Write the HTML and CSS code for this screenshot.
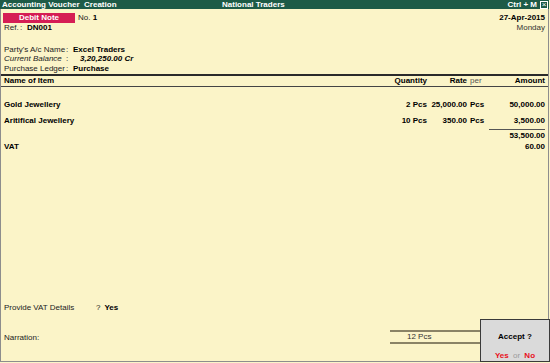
FILE: index.html
```html
<!DOCTYPE html>
<html>
<head>
<meta charset="utf-8">
<link rel="stylesheet" href="styles.css">
</head>
<body>
<div class="frame">
  <div class="titlebar">
    <span class="tb-left">Accounting Voucher&nbsp; Creation</span>
    <span class="tb-center">National Traders</span>
    <span class="tb-right">Ctrl + M <span class="closebox">×</span></span>
  </div>

  <div class="head">
    <div class="row r1">
      <span class="vtype">Debit Note</span>
      <span class="no">No. <b>1</b></span>
      <span class="push date">27-Apr-2015</span>
    </div>
    <div class="row r2">
      <span class="ref-l">Ref.</span><span class="ref-c">:</span><b>DN001</b>
      <span class="push day">Monday</span>
    </div>
    <div class="party">
      <span class="pl">Party's A/c Name</span><span class="pc">:</span><b>Excel Traders</b>
      <i class="pl">Current Balance</i><span class="pc">:</span><b class="bal">3,20,250.00 Cr</b>
      <span class="pl">Purchase Ledger</span><span class="pc">:</span><b>Purchase</b>
    </div>
  </div>

  <div class="items">
    <div class="grid ghead">
      <b>Name of Item</b>
      <b class="num">Quantity</b>
      <b class="num">Rate</b>
      <span class="per">per</span>
      <b class="num">Amount</b>
    </div>
    <div class="grid gi first">
      <b>Gold Jewellery</b>
      <b class="num">2 Pcs</b>
      <b class="num">25,000.00</b>
      <b class="per">Pcs</b>
      <b class="num">50,000.00</b>
    </div>
    <div class="grid gi second">
      <b>Aritifical Jewellery</b>
      <b class="num">10 Pcs</b>
      <b class="num">350.00</b>
      <b class="per">Pcs</b>
      <b class="num">3,500.00</b>
    </div>
    <div class="grid gi total">
      <span></span><span></span><span></span><span></span>
      <b class="num tline">53,500.00</b>
    </div>
    <div class="grid gi vat">
      <b>VAT</b><span></span><span></span><span></span>
      <b class="num">60.00</b>
    </div>
  </div>

  <div class="foot">
    <div class="vatrow">
      <span class="vl">Provide VAT Details</span><span>?</span><b class="yes">Yes</b>
    </div>
    <div class="narr">
      <span class="nl">Narration:</span>
      <span class="qtybox">12 Pcs</span>
    </div>
  </div>

  <div class="accept">
    <b class="acc-q">Accept ?</b>
    <div class="acc-a"><b class="red">Yes</b> <span class="or">or</span> <b class="red">No</b></div>
  </div>
</div>
</body>
</html>
```

FILE: styles.css
```css
* { box-sizing: border-box; }
html, body { margin: 0; padding: 0; }
body {
  width: 550px;
  height: 363px;
  background: #fbf4c8;
  font-family: "Liberation Sans", Arial, sans-serif;
  font-size: 8px;
  color: #222;
  overflow: hidden;
}
b { color: #000; font-weight: bold; }
.frame {
  position: relative;
  width: 549px;
  height: 362px;
  border-left: 1px solid #8d8d8d;
  border-right: 1px solid #8d8d8d;
  border-bottom: 1px solid #8d8d8d;
  display: flex;
  flex-direction: column;
}
.titlebar {
  height: 9px;
  background: #1d5b47;
  color: #fff;
  font-weight: bold;
  display: flex;
  align-items: center;
  line-height: 9px;
  padding: 0 1px 0 2px;
  margin-left: -1px;
  margin-right: -1px;
}
.tb-left { width: 220px; }
.tb-right { margin-left: auto; display: flex; align-items: center; gap: 3px; }
.closebox {
  width: 8px; height: 8px;
  border: 1px solid #fff;
  font-size: 8px;
  line-height: 6px;
  text-align: center;
  font-weight: normal;
}
.head { padding: 0 3px 0 2px; }
.row { display: flex; align-items: center; height: 10px; line-height: 10px; }
.r1 { margin-top: 4px; }
.vtype {
  width: 72px; height: 10px;
  background: #d51d55;
  color: #fff;
  font-weight: bold;
  text-align: center;
}
.no { margin-left: 3px; }
.push { margin-left: auto; }
.date { font-weight: bold; color: #000; }
.day { color: #333; }
.ref-l { margin-left: 1px; width: 16px; }
.ref-c { width: 7px; }
.party {
  margin-top: 11.5px;
  display: grid;
  grid-template-columns: 62px 7px auto;
  grid-auto-rows: 9.5px;
  line-height: 9.5px;
  margin-left: 1px;
}
.pl { font-style: normal; }
i.pl { font-style: italic; }
.bal { font-style: italic; padding-left: 7px; }

.items {
  margin-top: 1px;
  border-top: 2px solid #2a2a2a;
  padding: 0 3px 0 2px;
}
.grid {
  display: grid;
  grid-template-columns: 1fr 50px 40px 22px 56px;
  height: 10px;
  line-height: 10px;
  padding-left: 1px;
}
.ghead {
  border-bottom: 1px solid #444;
  height: 11px;
  margin: 0 -3px 0 -2px;
  padding: 0 3px 0 3px;
}
.num { text-align: right; }
.per { padding-left: 3px; }
.ghead .per { color: #555; }
.first { margin-top: 13px; }
.second { margin-top: 6px; }
.total { margin-top: 3px; height: 12px; }
.tline { border-top: 1px solid #555; line-height: 11px; }
.vat { margin-top: 1px; }

.foot { margin-top: auto; padding-left: 3px; }
.vatrow { display: flex; height: 10px; line-height: 10px; }
.vl { width: 92px; }
.yes { margin-left: 4px; }
.narr {
  display: flex;
  align-items: center;
  height: 14px;
  margin-top: 17px;
  margin-bottom: 17px;
}
.nl { width: 386px; }
.qtybox {
  width: 90px;
  height: 14px;
  border-top: 2px solid #8a8366;
  border-bottom: 2px solid #8a8366;
  padding-left: 17px;
  line-height: 10px;
  color: #333;
}
.accept {
  position: absolute;
  left: 479px;
  top: 319px;
  width: 70px;
  height: 43px;
  background: #dadada;
  border: 1px solid #3a3a3a;
  display: flex;
  flex-direction: column;
  align-items: center;
}
.acc-q { margin-top: 12px; line-height: 10px; }
.acc-a { margin-top: 9px; line-height: 10px; }
.red { color: #e8101c; }
.or { color: #9a9a9a; margin: 0 2px; }
```
